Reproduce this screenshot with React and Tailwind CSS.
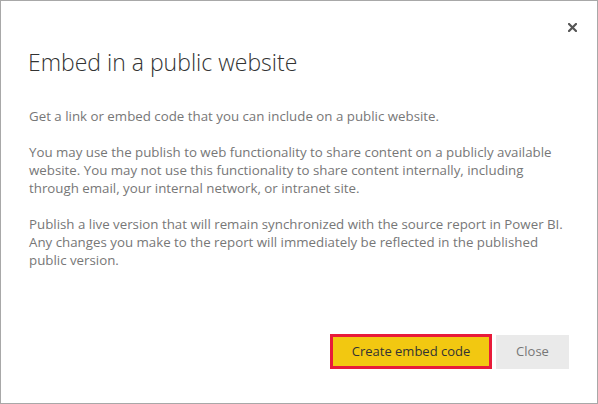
import React from "react";

const paragraphs = [
  "Get a link or embed code that you can include on a public website.",
  "You may use the publish to web functionality to share content on a publicly available website. You may not use this functionality to share content internally, including through email, your internal network, or intranet site.",
  "Publish a live version that will remain synchronized with the source report in Power BI. Any changes you make to the report will immediately be reflected in the published public version.",
];

export default function App() {
  return (
    <div
      className="w-[598px] h-[404px] bg-white border border-[#a8a8a8] flex flex-col"
      style={{ fontFamily: '"Open Sans", "Noto Sans", sans-serif' }}
    >
      {/* close icon */}
      <div className="flex justify-end pt-[22px] pr-[20px]">
        <button className="w-[9px] h-[9px] flex items-center justify-center" aria-label="Close">
          <svg width="9" height="9" viewBox="0 0 9 9">
            <path d="M1 1 L8 8 M8 1 L1 8" stroke="#555555" strokeWidth="2.2" strokeLinecap="square" />
          </svg>
        </button>
      </div>

      {/* title */}
      <h1 className="pl-[27px] mt-[15px] text-[23px] leading-[30px] font-light text-[#333333]">
        Embed in a public website
      </h1>

      {/* text */}
      <div className="pl-[28px] pr-[34px] mt-[30px] flex flex-col gap-[18px]">
        {paragraphs.map((p, i) => (
          <p key={i} className="text-[13.3px] leading-[18px] text-[#777777]">
            {p}
          </p>
        ))}
      </div>

      {/* buttons */}
      <div className="mt-auto flex justify-end items-center gap-[4px] pr-[28px] pb-[34px]">
        <button className="w-[162px] h-[35px] border-[3px] border-[#e81b3a] bg-[#f2c811] text-[13px] text-[#333333]">
          Create embed code
        </button>
        <button className="w-[73px] h-[34px] bg-[#eaeaea] text-[13px] text-[#777777]">
          Close
        </button>
      </div>
    </div>
  );
}
